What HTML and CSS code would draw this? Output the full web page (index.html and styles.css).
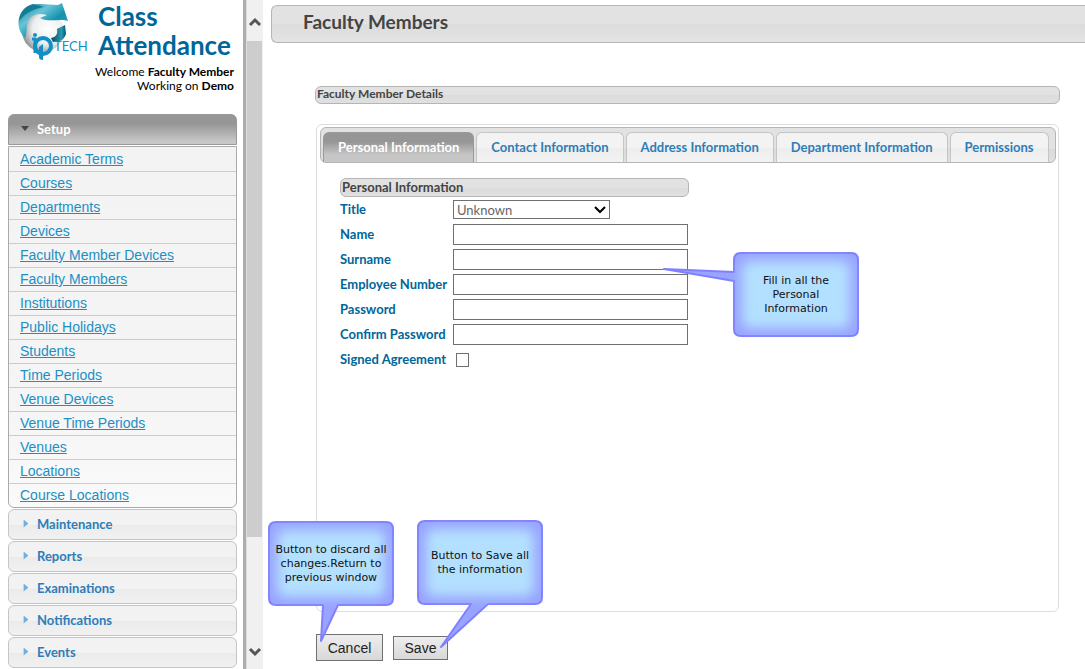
FILE: index.html
```html
<!DOCTYPE html>
<html lang="en">
<head>
<meta charset="utf-8">
<title>Class Attendance - Faculty Members</title>
<link rel="stylesheet" href="styles.css">
</head>
<body>
<div class="layout">
  <aside class="sidebar">
    <header class="brand">
      <svg class="logo" viewBox="0 0 74 62" role="img" aria-label="IP Tech">
        <defs>
          <radialGradient id="globe" cx="62%" cy="45%" r="62%"><stop offset="0" stop-color="#fff"/><stop offset=".6" stop-color="#eceeee"/><stop offset="1" stop-color="#8d9396"/></radialGradient>
          <linearGradient id="teal" x1="0" y1="0" x2="1" y2="1"><stop offset="0" stop-color="#0f6f86"/><stop offset=".35" stop-color="#68c5d8"/><stop offset=".6" stop-color="#1692ad"/><stop offset="1" stop-color="#3aaecb"/></linearGradient>
          <linearGradient id="ring" x1="0" y1="0" x2="1" y2="0"><stop offset="0" stop-color="#04495d"/><stop offset=".7" stop-color="#2a9ab5"/><stop offset="1" stop-color="#05526a"/></linearGradient>
        </defs>
        <circle cx="25" cy="29" r="21" fill="url(#globe)"/>
        <path d="M7 36C-2 27-1 14 6 7 15-1 28 3 40 3l4-2 6 18c-8-3-18 2-28-3l7-3c-7-2-13-1-17 3-5 6-2 13-5 20z" fill="url(#teal)"/>
        <path d="M1 19C2 10 7 4 15 2l11 3C16 7 8 10 1 19z" fill="#127d96"/>
        <path d="M39 27l8-4 1 9c-2 6-6 8-13 8l-2-4c5-1 7-4 6-9z" fill="url(#ring)"/>
        <circle cx="17" cy="33" r="2" fill="#138fc8"/>
        <path d="M14 37h3v14" fill="none" stroke="#138fc8" stroke-width="3"/>
        <circle cx="25" cy="44" r="8" fill="none" stroke="#138fc8" stroke-width="4"/>
        <path d="M21 45v10q0 3 4 3V42" fill="#138fc8"/>
        <text class="logo-text" x="36" y="49">TECH</text>
      </svg>
      <h1 class="brand-name">Class Attendance</h1>
    </header>
    <p class="welcome">Welcome <b>Faculty Member</b><br>Working on <b>Demo</b></p>
    <nav class="menu">
      <button class="menu-head menu-head-open" type="button" aria-expanded="true"><span class="arrow arrow-down"></span>Setup</button>
      <ul class="menu-list">
        <li><a href="#">Academic Terms</a></li>
        <li><a href="#">Courses</a></li>
        <li><a href="#">Departments</a></li>
        <li><a href="#">Devices</a></li>
        <li><a href="#">Faculty Member Devices</a></li>
        <li><a href="#">Faculty Members</a></li>
        <li><a href="#">Institutions</a></li>
        <li><a href="#">Public Holidays</a></li>
        <li><a href="#">Students</a></li>
        <li><a href="#">Time Periods</a></li>
        <li><a href="#">Venue Devices</a></li>
        <li><a href="#">Venue Time Periods</a></li>
        <li><a href="#">Venues</a></li>
        <li><a href="#">Locations</a></li>
        <li><a href="#">Course Locations</a></li>
      </ul>
      <button class="menu-head" type="button"><span class="arrow"></span>Maintenance</button>
      <button class="menu-head" type="button"><span class="arrow"></span>Reports</button>
      <button class="menu-head" type="button"><span class="arrow"></span>Examinations</button>
      <button class="menu-head" type="button"><span class="arrow"></span>Notifications</button>
      <button class="menu-head" type="button"><span class="arrow"></span>Events</button>
    </nav>
  </aside>
  <div class="scrollbar" aria-hidden="true">
    <svg class="scroll-arrow" viewBox="0 0 12 8"><path d="M1 7l5-5 5 5" /></svg>
    <div class="scroll-track"><div class="scroll-thumb"></div></div>
    <svg class="scroll-arrow" viewBox="0 0 12 8"><path d="M1 1l5 5 5-5" /></svg>
  </div>
  <main class="main">
    <h2 class="page-title">Faculty Members</h2>
    <div class="content">
      <h3 class="section-bar">Faculty Member Details</h3>
      <section class="panel">
        <div class="tabs" role="tablist">
          <button class="tab tab-active" type="button" role="tab" aria-selected="true">Personal Information</button>
          <button class="tab" type="button" role="tab">Contact Information</button>
          <button class="tab" type="button" role="tab">Address Information</button>
          <button class="tab" type="button" role="tab">Department Information</button>
          <button class="tab" type="button" role="tab">Permissions</button>
        </div>
        <form class="form" id="member">
          <h4 class="section-bar form-title">Personal Information</h4>
          <label for="title">Title</label>
          <div class="select-box">
            <select id="title"><option>Unknown</option></select>
            <svg class="chevron" viewBox="0 0 12 8"><path d="M1 1l5 5 5-5"/></svg>
          </div>
          <label for="name">Name</label><input class="field" id="name" type="text">
          <label for="surname">Surname</label><input class="field" id="surname" type="text">
          <label for="number">Employee Number</label><input class="field" id="number" type="text">
          <label for="password">Password</label><input class="field" id="password" type="password">
          <label for="confirm">Confirm Password</label><input class="field" id="confirm" type="password">
          <label for="signed">Signed Agreement</label><input class="check" id="signed" type="checkbox">
          <div class="callout callout-info">
            <svg class="callout-shape" viewBox="-72 -2 202 90">
              <defs><filter id="soft" x="-20%" y="-30%" width="140%" height="160%"><feGaussianBlur stdDeviation="6"/></filter></defs>
              <path class="callout-outline" d="M8 1h110q7 0 7 7v69q0 7-7 7H8q-7 0-7-7V29L-69 17 1 20V8q0-7 7-7z"/>
              <rect class="callout-glow" x="9" y="9" width="108" height="67" rx="8"/>
            </svg>
            <p>Fill in all the<br>Personal<br>Information</p>
          </div>
        </form>
      </section>
      <div class="actions">
        <button class="btn btn-large" type="button">Cancel</button>
        <button class="btn" type="submit" form="member">Save</button>
        <div class="callout callout-cancel">
          <svg class="callout-shape" viewBox="-2 -2 130 126">
            <path class="callout-outline" d="M8 1h110q7 0 7 7v69q0 7-7 7H70L53 120 55 84H8q-7 0-7-7V8q0-7 7-7z"/>
            <rect class="callout-glow" x="9" y="9" width="108" height="67" rx="8"/>
          </svg>
          <p>Button to discard all<br>changes.Return to<br>previous window</p>
        </div>
        <div class="callout callout-save">
          <svg class="callout-shape" viewBox="-2 -2 130 132">
            <path class="callout-outline" d="M8 1h110q7 0 7 7v69q0 7-7 7H71L24 127 54 84H8q-7 0-7-7V8q0-7 7-7z"/>
            <rect class="callout-glow" x="9" y="9" width="108" height="67" rx="8"/>
          </svg>
          <p>Button to Save all<br>the information</p>
        </div>
      </div>
    </div>
  </main>
</div>
</body>
</html>
```

FILE: styles.css
```css
* { box-sizing: border-box; }
body { margin: 0; background: #fff; color: #000; font-family: Lato, "Open Sans", sans-serif; font-size: 13px; }
h1, h2, h3, h4, p, ul { margin: 0; padding: 0; }
button, input, select { font: inherit; margin: 0; }

.layout { display: flex; min-height: 100vh; }
.sidebar { width: 243px; flex: none; padding: 2px 6px 0 8px; }
.brand { display: flex; padding-left: 10px; gap: 6px; height: 63px; }
.logo { width: 74px; height: 62px; flex: none; overflow: visible; }
.logo-text { font: 13px Lato, sans-serif; fill: #138fc8; }
.brand-name { font-size: 26px; line-height: 29px; font-weight: 700; color: #069; }
.welcome { font-size: 12px; line-height: 14px; text-align: right; padding-right: 3px; }
.welcome b { font-weight: 700; }

.menu { display: flex; flex-direction: column; gap: 1px; margin-top: 21px; }
.menu-head { display: flex; align-items: center; height: 31px; padding: 0 14px 2px; gap: 8px; border: 1px solid #c5c5c5; border-radius: 6px; background: linear-gradient(#f2f2f2 50%, #ebebeb 52%, #f1f1f1); color: #2e7db8; font-weight: 700; text-align: left; }
.menu-head-open { border-color: #999; border-radius: 6px 6px 0 0; background: linear-gradient(#969696 30%, #c6c6c6 90%); color: #fff; }
.arrow { width: 6px; height: 8px; background: #72aee0; clip-path: polygon(10% 0, 90% 50%, 10% 100%); }
.arrow-down { height: 6px; width: 8px; margin-left: -2px; background: #444; clip-path: polygon(0 10%, 100% 10%, 50% 90%); }
.menu-list { list-style: none; padding-top: 1px; border: 1px solid #aaa; border-radius: 0 0 6px 6px; background: linear-gradient(#f3f3f3, #f5f5f5 70%, #fafafa); font: 14px/23px "Liberation Sans", Arial, sans-serif; }
.menu-list li { height: 24px; padding-left: 11px; border-bottom: 1px solid #ccc; }
.menu-list li:last-child { height: 23px; border-bottom: 0; }
.menu-list a { color: #1c8fc4; }

.scrollbar { width: 21px; flex: none; display: flex; flex-direction: column; align-items: center; padding: 18px 1px 13px; background: #f0f0f0; border-left: 3px solid #adadad; box-shadow: inset 1px 0 #ddd; border-right: 1px solid #fff; }
.scroll-arrow { width: 12px; height: 8px; overflow: visible; fill: none; stroke: #555; stroke-width: 3; }
.scroll-track { flex: 1; align-self: stretch; margin: 15px 0 17px; }
.scroll-thumb { height: 84%; background: #cdcdcd; }

.main { flex: 1; min-width: 0; padding: 5px 0 8px 7px; display: flex; flex-direction: column; }
.page-title { height: 38px; padding-left: 31px; border: 1px solid #b5b5b5; border-right: 0; border-radius: 6px 0 0 6px; background: linear-gradient(#e2e2e2 50%, #dcdcdc 52%, #e4e4e4); color: #444; font-size: 19px; line-height: 32px; font-weight: 700; }
.content { flex: 1; display: flex; flex-direction: column; padding: 43px 25px 0 44px; }
.section-bar { height: 18px; padding-left: 1px; border: 1px solid #b5b5b5; border-radius: 6px; background: linear-gradient(#e2e2e2 50%, #dbdbdb 52%, #e0e0e0); color: #444; font-size: 12px; line-height: 14px; font-weight: 700; }
.panel { flex: 1; margin: 20px 1px 0; padding: 2px 2px 0 3px; border: 1px solid #ddd; border-radius: 6px; }
.tabs { display: flex; gap: 2px; height: 36px; padding: 4px 2px 0; border: 1px solid #b5b5b5; border-radius: 6px; background: linear-gradient(#e2e2e2 60%, #dadada 62%, #e0e0e0); }
.tab { padding: 0 14px 2px; border: 1px solid #c5c5c5; border-bottom: 0; border-radius: 6px 6px 0 0; background: linear-gradient(#f3f3f3 50%, #ededed 52%, #f3f3f3); color: #2e7db8; font-weight: 700; white-space: nowrap; }
.tab-active { border-color: #999; background: linear-gradient(#969696 30%, #c6c6c6 75%); color: #fff; }

.form { position: relative; display: grid; grid-template-columns: 113px 236px; grid-template-rows: 19px; grid-auto-rows: 25px; align-items: center; width: 350px; margin: 15px 0 0 20px; }
.form label { padding-bottom: 2px; color: #069; font-weight: 700; white-space: nowrap; }
.form-title { grid-column: 1 / 3; height: 19px; font-size: 13px; line-height: 17px; }
.field { width: 235px; height: 21px; border: 1px solid #707070; background: #fff; padding: 0 3px; }
.select-box { display: grid; width: 157px; height: 19px; }
.select-box > * { grid-area: 1 / 1; }
.select-box select { appearance: none; height: 19px; border: 1px solid #707070; border-radius: 0; background: #fff; color: #666; padding: 0 3px; line-height: 16px; }
.chevron { width: 12px; height: 8px; justify-self: end; align-self: center; margin-right: 4px; fill: none; stroke: #000; stroke-width: 2; pointer-events: none; }
.check { appearance: none; width: 13px; height: 14px; margin-left: 3px; border: 1px solid #707070; background: #fff; }

.actions { position: relative; display: flex; align-items: center; gap: 10px; margin: 22px 1px 0; }
.btn { height: 24px; width: 55px; padding: 0; border: 1px solid #707070; background: linear-gradient(#eee, #d8d8d8); color: #222; font: 14px "Liberation Sans", Arial, sans-serif; }
.btn-large { width: 67px; height: 27px; }

.callout { position: absolute; width: 126px; height: 85px; display: flex; align-items: center; justify-content: center; text-align: center; font: 11px/14px "DejaVu Sans", Verdana, sans-serif; color: #111; pointer-events: none; }
.callout p { position: relative; white-space: nowrap; }
.callout-shape { position: absolute; top: -2px; left: -2px; }
.callout-outline { fill: #98a4ff; stroke: #8080ff; stroke-width: 2; stroke-linejoin: round; }
.callout-glow { fill: #b4e0ff; filter: url(#soft); }
.callout-info { left: 393px; top: 74px; }
.callout-info .callout-shape { left: -72px; width: 202px; height: 90px; }
.callout-cancel { left: -48px; top: -113px; }
.callout-cancel .callout-shape { width: 130px; height: 126px; }
.callout-save { left: 101px; top: -114px; }
.callout-save .callout-shape { width: 130px; height: 132px; }
```
